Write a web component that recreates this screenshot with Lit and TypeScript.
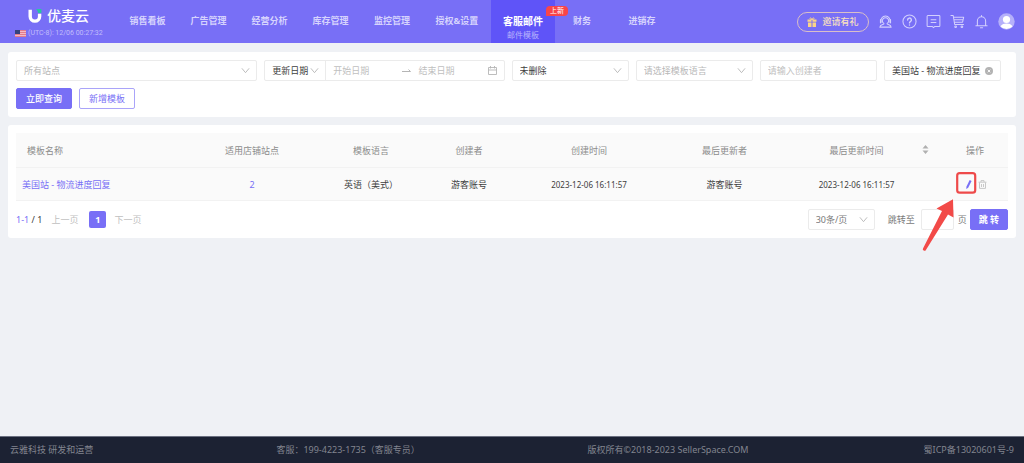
import { LitElement, html, css, svg } from "lit";
import { customElement, state } from "lit/decorators.js";
import { classMap } from "lit/directives/class-map.js";

interface NavItem {
  label: string;
  sub?: string;
  badge?: string;
  active?: boolean;
}

const NAV: NavItem[] = [
  { label: "销售看板" },
  { label: "广告管理" },
  { label: "经营分析" },
  { label: "库存管理" },
  { label: "监控管理" },
  { label: "授权&设置" },
  { label: "客服邮件", sub: "邮件模板", badge: "上新", active: true },
  { label: "财务" },
  { label: "进销存" },
];

const chevron = html`<svg class="chevron" viewBox="0 0 10 10" aria-hidden="true">
  <path d="M1 2.6 5 7.4 9 2.6" fill="none" stroke="currentColor" stroke-width="1" />
</svg>`;

const line = (body: unknown) => html`<svg class="tool-icon" viewBox="0 0 16 16" aria-hidden="true">
  <g fill="none" stroke="currentColor" stroke-width="1.1" stroke-linecap="round" stroke-linejoin="round">${body}</g>
</svg>`;

const TOOLS = [
  {
    name: "在线客服",
    icon: line(svg`<path d="M3.200 8.600A5 5 0 1 1 12.800 8.600" /><path d="M2.800 6v3.400M13.200 6v3.400" stroke-width="1.500" /><path d="M6.400 10.300a3.400 3.400 0 1 1 3.200 0c0 1.200 4.400.9 4.400 3.700H2c0-2.800 4.400-2.500 4.400-3.700Z" />`),
  },
  {
    name: "帮助",
    icon: line(svg`<circle cx="8" cy="8" r="7" /><path d="M6 6.4a2 2 0 1 1 3 1.700c-.7.4-1 .7-1 1.400M8 11.600v.2" stroke-width="1.500" />`),
  },
  {
    name: "消息",
    icon: line(svg`<path d="M2 1.700h12a.8.8 0 0 1 .8.8v10a.8.8 0 0 1-.8.8H9.400L8 14.500l-1.400-1.200H2a.8.8 0 0 1-.8-.8v-10a.8.8 0 0 1 .8-.8ZM5.400 6.200h5.200M5.400 9h5.200" />`),
  },
  {
    name: "购物车",
    icon: line(svg`<path d="M1 1.600h2.400L5 11.200h9.400M3.800 3.400h10.800l-1.200 5.400H4.600M4.200 6.100h9.800" /><circle cx="6" cy="13.600" r=".9" /><circle cx="12.700" cy="13.600" r=".9" />`),
  },
  {
    name: "通知",
    icon: line(svg`<path d="M2 12.600h12M3.600 12.600V7.400a4.400 4.400 0 0 1 8.800 0v5.200M8 1.500v1.300M6.800 14.600h2.400" />`),
  },
];

@customElement("app-root")
export class AppRoot extends LitElement {
  @state() private keyword = "美国站 - 物流进度回复";

  static styles = css`
    :host {
      display: flex;
      flex-direction: column;
      min-height: 100vh;
      background: #eff1f5;
      color: #4c4c4c;
      font: 9px/14px "Noto Sans", "Noto Sans CJK SC", sans-serif;
    }
    *, *::before, *::after { box-sizing: border-box; }
    a { color: inherit; text-decoration: none; }
    button, input, select { font: inherit; color: inherit; margin: 0; }
    button { cursor: pointer; }
    svg { display: block; flex: none; }

    .top {
      display: flex;
      height: 43px;
      background: #786ff6;
      color: #d6d3fd;
    }
    .brand {
      flex: none;
      width: 117px;
      padding: 7px 0 0 15px;
    }
    .logo {
      display: flex;
      align-items: center;
      gap: 5px;
      height: 18px;
      padding-left: 13px;
      color: #fff;
      font-size: 14px;
      font-weight: 500;
    }
    .mark { width: 14px; height: 15px; }
    .clock {
      display: flex;
      align-items: center;
      gap: 2px;
      height: 16px;
      font: 7px/16px Roboto, "Noto Sans CJK SC", sans-serif;
      color: #c1bdfb;
      white-space: nowrap;
    }
    .flag { width: 11px; height: 7px; }
    .nav {
      display: grid;
      grid-template-columns: repeat(4, 61px) 62px 68px 64px 54px 66px;
    }
    .nav-item {
      position: relative;
      display: flex;
      flex-direction: column;
      align-items: center;
      padding-top: 14px;
      font-weight: 700;
      white-space: nowrap;
    }
    .nav-item.active {
      background: #5f54f8;
      color: #fff;
      font-size: 10px;
    }
    .nav-sub { font-size: 8px; font-weight: 400; color: #b9b4fd; }
    .badge {
      position: absolute;
      top: 6px;
      right: -13px;
      z-index: 1;
      width: 22px;
      height: 10px;
      border-radius: 4px 4px 4px 0;
      background: #fa4549;
      color: #fff;
      font-size: 7px;
      font-weight: 400;
      line-height: 10px;
      text-align: center;
    }
    .tools {
      display: flex;
      align-items: center;
      gap: 9px;
      margin-left: auto;
      padding-right: 9px;
    }
    .invite {
      display: flex;
      align-items: center;
      justify-content: center;
      gap: 5px;
      width: 72px;
      height: 20px;
      padding: 0;
      border: 1px solid #d9bfc8;
      border-radius: 10px;
      background: none;
      color: #f9e0c0;
      font-weight: 500;
    }
    .gift { width: 10px; height: 10px; }
    .tool {
      padding: 0;
      border: 0;
      background: none;
      color: #d3d0fd;
    }
    .tool-icon { width: 15px; height: 15px; }
    .avatar { width: 17px; height: 17px; }

    .main {
      flex: 1;
      display: flex;
      flex-direction: column;
      gap: 8px;
      padding: 9px 8px;
    }
    .card {
      padding: 8px;
      border-radius: 3px;
      background: #fff;
    }
    .filters {
      display: grid;
      grid-template-columns: 241fr 240fr repeat(4, 117fr);
      gap: 7px;
      padding-right: 7px;
    }
    .field {
      position: relative;
      display: flex;
      align-items: center;
      min-width: 0;
      height: 21px;
      border: 1px solid #ebebeb;
      border-radius: 2px;
      background: #fff;
    }
    .field select, .field input {
      flex: 1;
      width: 100%;
      min-width: 0;
      height: 19px;
      padding: 0 0 0 7px;
      border: 0;
      outline: 0;
      appearance: none;
      background: none;
    }
    .field input::placeholder { color: #bfbfbf; opacity: 1; }
    .field select.empty { color: #b8b8b8; }
    .chevron {
      position: absolute;
      right: 6px;
      width: 9px;
      height: 9px;
      color: #b5b5b5;
      pointer-events: none;
    }
    .by {
      position: relative;
      display: flex;
      align-items: center;
      flex: none;
      width: 61px;
      border-right: 1px solid #ebebeb;
    }
    .arrow { width: 9px; height: 6px; color: #b5b5b5; }
    .cal { width: 9px; height: 9px; margin-right: 7px; color: #b5b5b5; }
    .clear {
      padding: 0;
      margin-right: 7px;
      border: 0;
      background: none;
      color: #b3b3b3;
    }
    .clear svg { width: 8px; height: 8px; }
    .strong { color: #404040; }
    .actions {
      display: flex;
      gap: 7px;
      padding-top: 7px;
    }
    .btn {
      height: 21px;
      padding: 0 9px;
      border: 1px solid #786ff6;
      border-radius: 2px;
      background: #786ff6;
      color: #fff;
      font-weight: 500;
      line-height: 19px;
    }
    .btn.ghost {
      border-color: #aaa4f9;
      background: #fff;
      color: #786ff6;
      font-weight: 400;
    }
    .btn.jump { padding: 0 8px; font-weight: 700; }

    .table {
      width: 100%;
      table-layout: fixed;
      border-collapse: separate;
      border-spacing: 0;
      background: #fafafa;
    }
    .c1 { width: 184px; }
    .c2 { width: 104px; }
    .c3 { width: 134px; }
    .c4 { width: 62px; }
    .c5 { width: 178px; }
    .c6 { width: 93px; }
    .c7 { width: 171px; }
    .c8 { width: 66px; }
    .table th, .table td {
      padding: 1px 0 0;
      border-bottom: 1px solid #f2f2f2;
      text-align: center;
      white-space: nowrap;
    }
    .table th {
      height: 35px;
      color: #8c8c8c;
      font-weight: 400;
    }
    .table td { height: 33px; color: #404040; }
    .table th.first { padding-left: 11px; text-align: left; }
    .table td.first { padding-left: 6px; text-align: left; }
    .table td.time { font-size: 8px; }
    .table td .link { color: #786ff6; }
    .sortable { position: relative; }
    .sort {
      position: absolute;
      top: 12px;
      right: 13px;
      padding: 0;
      border: 0;
      background: none;
      color: #b0b0b0;
    }
    .sort svg { width: 7px; height: 9px; }
    .ops {
      position: relative;
      display: flex;
      align-items: center;
      justify-content: center;
      gap: 5px;
    }
    .op {
      padding: 0;
      border: 0;
      background: none;
      color: #786ff6;
    }
    .op.off { color: #c8c8c8; }
    .op svg { width: 9px; height: 9px; }
    .callout {
      position: absolute;
      top: -10px;
      left: -22px;
      z-index: 2;
      width: 60px;
      height: 84px;
      pointer-events: none;
    }

    .pager {
      display: flex;
      align-items: center;
      padding-top: 8px;
    }
    .count { color: #404040; }
    .count .range { color: #786ff6; }
    .step {
      padding: 0;
      border: 0;
      background: none;
      color: #bfbfbf;
    }
    .pages {
      display: flex;
      align-items: center;
      gap: 8px;
      margin-left: 9px;
    }
    .page {
      width: 17px;
      height: 17px;
      margin-left: 3px;
      padding: 0;
      border: 0;
      border-radius: 2px;
      background: #786ff6;
      color: #fff;
      font-weight: 700;
    }
    .jumper {
      display: flex;
      align-items: center;
      margin-left: auto;
      color: #7a7a7a;
    }
    .size { width: 67px; margin-right: 13px; }
    .goto { display: flex; align-items: center; gap: 6px; margin-right: 4px; }
    .goto .field { width: 33px; }
    .unit { margin-right: 3px; }

    .foot {
      display: grid;
      grid-template-columns: 268fr 313fr 338fr auto;
      align-items: center;
      height: 27px;
      padding: 0 10px;
      border-top: 1px solid #6b7080;
      background: #1c2233;
      color: #82858f;
    }
  `;

  private renderNav(item: NavItem) {
    return html`<a href="#" class=${classMap({ "nav-item": true, active: !!item.active })}>
      <span>${item.label}</span>
      ${item.sub ? html`<span class="nav-sub">${item.sub}</span>` : null}
      ${item.badge ? html`<span class="badge">${item.badge}</span>` : null}
    </a>`;
  }

  private renderHeader() {
    return html`<header class="top">
      <div class="brand">
        <div class="logo">
          <svg class="mark" viewBox="0 0 14 15" aria-hidden="true">
            <path d="M2.200.8v6.600a4.700 4.700 0 0 0 9.400 0V4.800" fill="none" stroke="#fff" stroke-width="3.400" />
            <path d="M8 0h5.400v4h-3.400C10 2.200 9.200 1 8 0Z" fill="#27c4a4" />
          </svg>
          <span>优麦云</span>
        </div>
        <div class="clock">
          <svg class="flag" viewBox="0 0 11 7" aria-hidden="true">
            <rect width="11" height="7" fill="#f3b9c4" />
            <path d="M0 .5h11M0 2.500h11M0 4.500h11M0 6.500h11" stroke="#e27c8c" stroke-width="1" />
            <rect width="5" height="4" fill="#34427e" />
          </svg>
          <span>(UTC-8): 12/06 00:27:32</span>
        </div>
      </div>
      <nav class="nav">${NAV.map((n) => this.renderNav(n))}</nav>
      <div class="tools">
        <button class="invite">
          <svg class="gift" viewBox="0 0 10 10" aria-hidden="true">
            <path d="M.5 2.600h4v2.200h-4zM5.500 2.600h4v2.200h-4zM1 5.600h3.500V10H1zM5.500 5.600H9V10H5.500z" fill="#fbd488" />
            <path d="M5 2.600C3.500 2.600 2.600 2 3 1.200 3.600.4 4.800 1.200 5 2.600 5.200 1.200 6.400.4 7 1.200 7.400 2 6.500 2.600 5 2.600" fill="none" stroke="#fbd488" stroke-width=".9" />
          </svg>
          <span>邀请有礼</span>
        </button>
        ${TOOLS.map((t) => html`<button class="tool" aria-label=${t.name}>${t.icon}</button>`)}
        <button class="tool" aria-label="账号">
          <svg class="avatar" viewBox="0 0 17 17" aria-hidden="true">
            <circle cx="8.500" cy="8.500" r="8.200" fill="#b5b0fa" />
            <circle cx="8.500" cy="6.500" r="3.600" fill="#fff" />
            <path d="M2.400 13.200c1.600-1.900 3.600-2.600 6.100-2.600s4.500.7 6.100 2.600a8 8 0 0 1-12.200 0Z" fill="#fff" />
          </svg>
        </button>
      </div>
    </header>`;
  }

  private renderFilters() {
    return html`<section class="card">
      <div class="filters">
        <div class="field">
          <select class="empty" aria-label="站点"><option>所有站点</option></select>${chevron}
        </div>
        <div class="field">
          <div class="by">
            <select class="strong" aria-label="日期类型"><option>更新日期</option></select>${chevron}
          </div>
          <input placeholder="开始日期" aria-label="开始日期" />
          <svg class="arrow" viewBox="0 0 9 6" aria-hidden="true">
            <path d="M0 3.500h8.500L6.500 1.500" fill="none" stroke="currentColor" />
          </svg>
          <input placeholder="结束日期" aria-label="结束日期" />
          <svg class="cal" viewBox="0 0 9 9" aria-hidden="true">
            <path d="M.5 1.500h8v7h-8zM.5 4h8M2.500 0v2.500M6.500 0v2.500" fill="none" stroke="currentColor" stroke-width=".9" />
          </svg>
        </div>
        <div class="field">
          <select class="strong" aria-label="状态"><option>未删除</option></select>${chevron}
        </div>
        <div class="field">
          <select class="empty" aria-label="模板语言"><option>请选择模板语言</option></select>${chevron}
        </div>
        <div class="field"><input placeholder="请输入创建者" aria-label="创建者" /></div>
        <div class="field">
          <input class="strong" .value=${this.keyword} aria-label="模板名称" />
          <button class="clear" aria-label="清除" @click=${() => (this.keyword = "")}>
            <svg viewBox="0 0 8 8" aria-hidden="true">
              <circle cx="4" cy="4" r="4" fill="currentColor" />
              <path d="M2.700 2.700 5.300 5.300M5.300 2.700 2.700 5.300" stroke="#fff" stroke-width=".9" />
            </svg>
          </button>
        </div>
      </div>
      <div class="actions">
        <button class="btn">立即查询</button>
        <button class="btn ghost">新增模板</button>
      </div>
    </section>`;
  }

  private renderTable() {
    return html`<table class="table">
      <colgroup>
        ${[1, 2, 3, 4, 5, 6, 7, 8].map((n) => html`<col class="c${n}" />`)}
      </colgroup>
      <thead>
        <tr>
          <th class="first">模板名称</th>
          <th>适用店铺站点</th>
          <th>模板语言</th>
          <th>创建者</th>
          <th>创建时间</th>
          <th>最后更新者</th>
          <th class="sortable">
            最后更新时间
            <button class="sort" aria-label="排序">
              <svg viewBox="0 0 7 9" aria-hidden="true">
                <path d="M3.500 0 6.500 3.600h-6zM3.500 9 .5 5.400h6z" fill="currentColor" />
              </svg>
            </button>
          </th>
          <th>操作</th>
        </tr>
      </thead>
      <tbody>
        <tr>
          <td class="first"><a class="link" href="#">美国站 - 物流进度回复</a></td>
          <td><a class="link" href="#">2</a></td>
          <td>英语（美式）</td>
          <td>游客账号</td>
          <td class="time">2023-12-06 16:11:57</td>
          <td>游客账号</td>
          <td class="time">2023-12-06 16:11:57</td>
          <td>
            <div class="ops">
              <button class="op" aria-label="编辑">
                <svg viewBox="0 0 9 9" aria-hidden="true">
                  <path d="M5.700 0 7.600.9 4.200 7.700 2.300 9 2.400 6.700Z" fill="currentColor" />
                </svg>
              </button>
              <button class="op off" aria-label="删除">
                <svg viewBox="0 0 9 9" aria-hidden="true">
                  <path d="M.5 2.200h8M3 2V.6h3V2M1.500 2.400v6h6v-6M3.500 4v3M5.500 4v3" fill="none" stroke="currentColor" />
                </svg>
              </button>
              <svg class="callout" viewBox="0 0 60 84" aria-hidden="true">
                <rect x="37.200" y="3.200" width="18" height="19.500" rx="2.500" fill="none" stroke="#ee4a4a" stroke-width="2.200" />
                <path d="M33 29.200 16.500 38.500 22 41 3 78.400a1.600 1.600 0 0 0 2.900 1.500L28 44.500 33.500 47.500Z" fill="#f24a48" />
              </svg>
            </div>
          </td>
        </tr>
      </tbody>
    </table>`;
  }

  render() {
    return html`
      ${this.renderHeader()}
      <main class="main">
        ${this.renderFilters()}
        <section class="card">
          ${this.renderTable()}
          <div class="pager">
            <span class="count"><span class="range">1-1</span> / 1</span>
            <div class="pages">
              <button class="step">上一页</button>
              <button class="page">1</button>
              <button class="step">下一页</button>
            </div>
            <div class="jumper">
              <div class="field size">
                <select aria-label="每页条数"><option>30条/页</option></select>${chevron}
              </div>
              <div class="goto">
                <label for="page-no">跳转至</label>
                <div class="field"><input id="page-no" /></div>
              </div>
              <span class="unit">页</span>
              <button class="btn jump">跳 转</button>
            </div>
          </div>
        </section>
      </main>
      <footer class="foot">
        <span>云雅科技 研发和运营</span>
        <span>客服：199-4223-1735（客服专员）</span>
        <span>版权所有©2018-2023 SellerSpace.COM</span>
        <a href="#">蜀ICP备13020601号-9</a>
      </footer>
    `;
  }
}
